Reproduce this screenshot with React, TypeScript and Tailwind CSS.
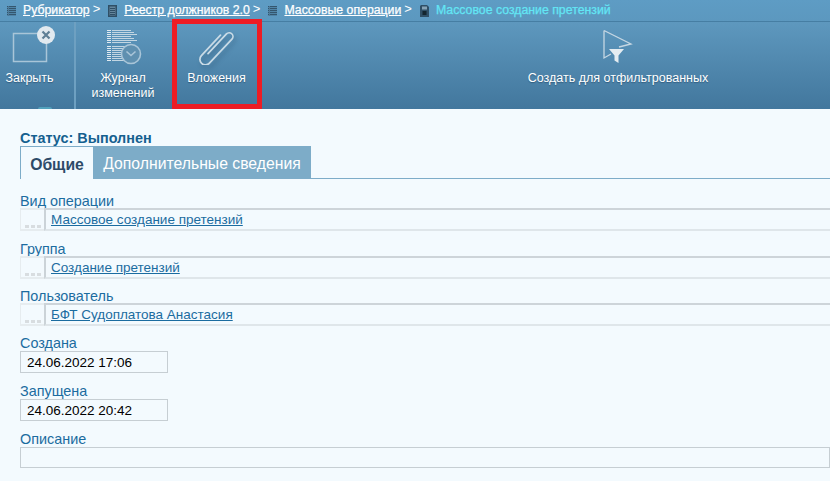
import React from 'react';

const FONT = "font-['Liberation_Sans',Arial,sans-serif]";

const ListIcon = () => (
  <svg width="9" height="10" viewBox="0 0 9 10" className="shrink-0">
    {[0, 2, 4, 6, 8].map((y) => (
      <rect key={y} x="0" y={y} width="9" height="1.300" fill="#34566e" />
    ))}
    <rect x="1" y="0" width="1" height="10" fill="#4f7a98" />
  </svg>
);

const BookIcon = () => (
  <svg width="9" height="12" viewBox="0 0 9 12" className="shrink-0">
    <rect x="0" y="0" width="9" height="12" fill="#2f4f66" />
    <rect x="1.500" y="1.500" width="6" height="9" fill="#65869c" />
    {[3, 5, 7, 9].map((y) => (
      <rect key={y} x="2" y={y} width="5" height="1" fill="#2f4f66" />
    ))}
  </svg>
);

const DocIcon = () => (
  <svg width="9" height="12" viewBox="0 0 9 12" className="shrink-0">
    <path d="M1 0h6l2 2v10H0V1z" fill="#2f4f66" />
    <rect x="2" y="1.500" width="5" height="3" fill="#86a3b6" />
    <rect x="2.500" y="6" width="4" height="4" fill="#13252f" />
  </svg>
);

const Crumb = ({ icon, label }: { icon: React.ReactNode; label: string }) => (
  <>
    {icon}
    <a className="ml-[7px] text-white underline [-webkit-text-stroke:0.25px_white]">{label}</a>
    <span className="ml-[3px] mr-[8px] -mt-[4px] text-white text-[13px]">&gt;</span>
  </>
);

const CloseIcon = () => (
  <svg width="46" height="38" viewBox="0 0 46 38" className="ml-[10px] overflow-visible">
    <rect x="1.500" y="4.500" width="33" height="28" fill="none" stroke="#a9c5d8" strokeWidth="1.500" />
    <circle cx="34" cy="6" r="9" fill="#e1e9ef" />
    <path d="M30.500 2.500l7 7M37.500 2.500l-7 7" stroke="#5f7f95" strokeWidth="2.200" />
  </svg>
);

const JournalIcon = () => (
  <svg width="36" height="36" viewBox="0 0 36 36" className="ml-[4px]">
    {[1, 3, 5, 7, 9, 11, 13, 17, 19, 21, 23, 25, 27, 29, 31].map((y, i) => (
      <g key={y}>
        <rect x="0" y={y} width="4" height="1" fill="#dfeaf1" />
        <rect x="5" y={y} width={i < 7 ? 19 + (i % 3) * 3 : 14} height="1" fill="#c3d6e2" />
      </g>
    ))}
    <circle cx="24" cy="25" r="9.500" fill="#5f90b0" stroke="#a9c5d8" strokeWidth="1.600" />
    <path d="M19.500 22.500l4.500 4 4.500-4" fill="none" stroke="#a9c5d8" strokeWidth="1.600" />
  </svg>
);

const ClipIcon = () => (
  <svg width="36" height="36" viewBox="0 0 36 36" className="drop-shadow-[2px_3px_2px_rgba(30,60,90,0.35)]">
    <g transform="rotate(43 18 18) translate(12.500 -5)">
      <path
        d="M3.500 34V7a3.750 3.750 0 0 1 7.500 0V40a5.500 5.500 0 0 1-11 0V12"
        fill="none"
        stroke="#c9dbe6"
        strokeWidth="1.700"
        strokeLinecap="round"
      />
    </g>
  </svg>
);

const FilterIcon = () => (
  <svg width="30" height="36" viewBox="0 0 30 36">
    <path d="M1 1.500L28 15 16 18M8 25L1 29V1.500" fill="none" stroke="#c6d7e3" strokeWidth="1.300" />
    <path d="M6 20h15l-5.500 6.500V34l-4-2.500v-5z" fill="#e4ecf1" />
  </svg>
);

const ToolButton = ({
  icon,
  lines,
  className,
}: {
  icon: React.ReactNode;
  lines: string[];
  className: string;
}) => (
  <div className={`flex flex-col items-center pt-[7px] ${className}`}>
    <div className="h-[38px] flex items-start justify-center">{icon}</div>
    <div className="mt-[4px] text-center text-white text-[12.5px] leading-[15px] whitespace-nowrap [text-shadow:0_1px_1px_rgba(20,50,80,0.45)]">
      {lines.map((line) => (
        <div key={line}>{line}</div>
      ))}
    </div>
  </div>
);

const DotsButton = () => (
  <div className="w-[24px] shrink-0 border-2 border-l-[1px] border-r-0 border-[#e6ecef] flex items-end justify-center gap-[2px] pb-[1px]">
    {[0, 1, 2].map((i) => (
      <span key={i} className="w-[4px] h-[3px] bg-[#d8dde0]" />
    ))}
  </div>
);

const LinkField = ({ label, value }: { label: string; value: string }) => (
  <div className="h-[47.5px]">
    <div className="h-[16px] leading-[18px] text-[14.4px] text-[#1b6ca0]">{label}</div>
    <div className="h-[23px] flex">
      <DotsButton />
      <div className="flex-1 border-l-2 border-t-2 border-b-2 border-l-[#cbd3d8] border-t-[#cdd4d9] border-b-[#dfe6ea] pl-[5px] leading-[20px] text-[13.5px]">
        <a className="text-[#1b6ca0] underline">{value}</a>
      </div>
    </div>
  </div>
);

const DateField = ({ label, value }: { label: string; value: string }) => (
  <div className="h-[48px]">
    <div className="h-[16px] leading-[16px] text-[14.4px] text-[#1b6ca0]">{label}</div>
    <div className="w-[148px] h-[22px] border border-[#c6ced3] pl-[6px] leading-[21px] text-[13.5px] text-black">
      {value}
    </div>
  </div>
);

export default function App() {
  return (
    <div className={`${FONT} relative w-[830px] h-[481px] overflow-hidden bg-[#f3fafe]`}>
      <div className="h-[22px] flex items-center pl-[7px] text-[12.3px] bg-gradient-to-b from-[#5e9cc4] to-[#5c98bf] border-b border-[#467ea3]">
        <Crumb icon={<ListIcon />} label="Рубрикатор" />
        <Crumb icon={<BookIcon />} label="Реестр должников 2.0" />
        <Crumb icon={<ListIcon />} label="Массовые операции" />
        <DocIcon />
        <span className="ml-[7px] text-[#63e6f5] [-webkit-text-stroke:0.25px_#63e6f5]">Массовое создание претензий</span>
      </div>

      <div className="relative h-[87px] flex bg-gradient-to-b from-[#5e98be] to-[#42779d]">
        <ToolButton icon={<CloseIcon />} lines={['Закрыть']} className="w-[76px] pr-[15px] border-r-2 border-[#6ea0c1]" />
        <ToolButton icon={<JournalIcon />} lines={['Журнал', 'изменений']} className="w-[96px] pr-[2px]" />
        <ToolButton icon={<ClipIcon />} lines={['Вложения']} className="w-[89px]" />
        <ToolButton icon={<FilterIcon />} lines={['Создать для отфильтрованных']} className="w-[178px] ml-[268px]" />
        <div className="absolute left-[38px] bottom-0 w-[14px] h-[2px] rounded-t-full bg-[#59b3c9]/70" />
      </div>

      {/* red annotation around the attachments button */}
      <div className="absolute left-[172px] top-[19px] w-[90px] h-[90px] border-[5px] border-[#ed1c24]" />

      <div className="pl-[20px] pt-[21px]">
        <div className="h-[16px] leading-[16px] text-[14.4px] font-bold text-[#14608f]">Статус: Выполнен</div>
        <div className="flex h-[33px] border-b border-[#7dacc8]">
          <div className="w-[73px] h-[33px] border-l border-t border-[#7dacc8] bg-[#f3fafe] pt-[6px] text-center text-[15.75px] font-bold text-[#2d4a68]">
            Общие
          </div>
          <div className="w-[218px] h-[32px] bg-[#7dacc8] pt-[6px] text-center text-[15.75px] text-white">
            Дополнительные сведения
          </div>
        </div>
        <div className="mt-[13px]">
          <LinkField label="Вид операции" value="Массовое создание претензий" />
          <LinkField label="Группа" value="Создание претензий" />
          <LinkField label="Пользователь" value="БФТ Судоплатова Анастасия" />
          <DateField label="Создана" value="24.06.2022 17:06" />
          <DateField label="Запущена" value="24.06.2022 20:42" />
          <div className="text-[14.4px] leading-[16px] text-[#1b6ca0]">Описание</div>
          <div className="h-[21px] border border-[#c6ced3]" />
        </div>
      </div>
    </div>
  );
}
